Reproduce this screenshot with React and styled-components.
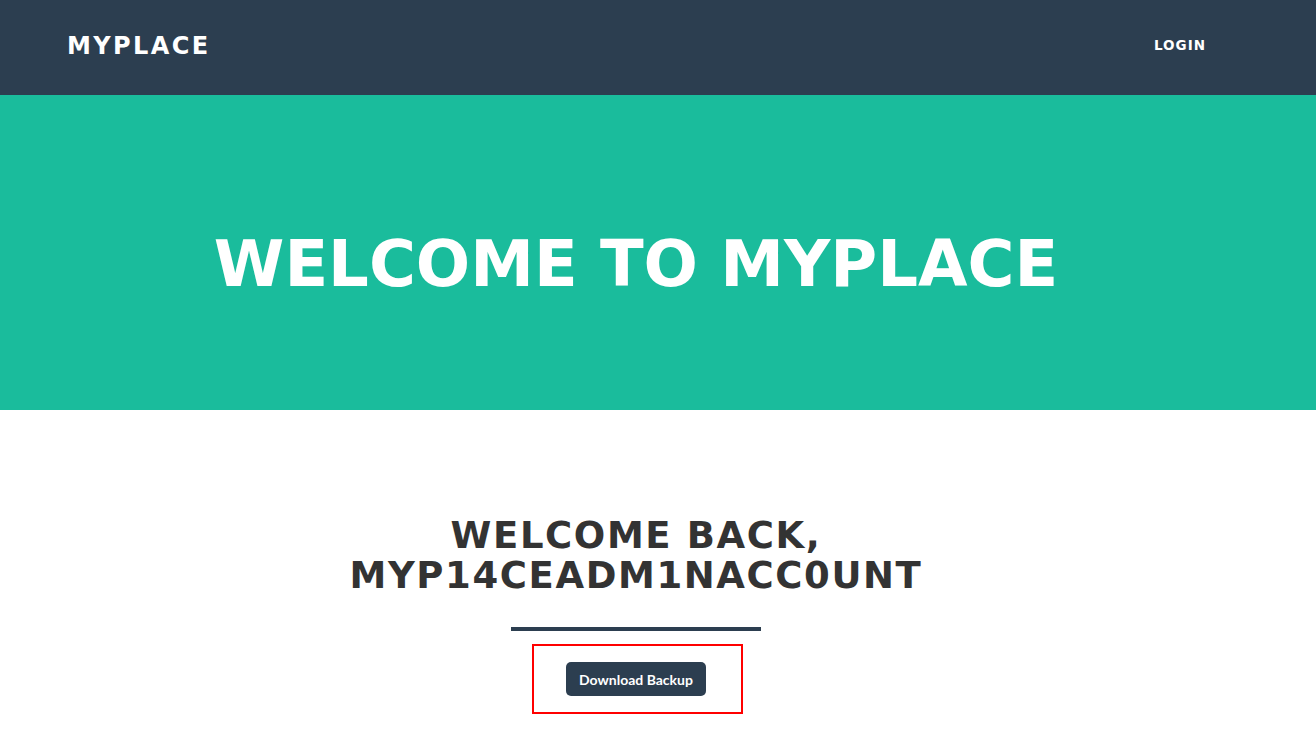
import React from "react";
import styled, { createGlobalStyle } from "styled-components";

const GlobalStyle = createGlobalStyle`
  html, body {
    margin: 0;
    padding: 0;
    background: #ffffff;
  }
  body {
    font-family: "Lato", "Noto Sans", sans-serif;
    overflow: hidden;
  }
  * { box-sizing: border-box; }
`;

const Page = styled.div`
  width: 1316px;
  min-height: 747px;
  display: flex;
  flex-direction: column;
`;

const NavBar = styled.nav`
  height: 95px;
  background: #2c3e50;
  display: flex;
  align-items: center;
  justify-content: space-between;
  padding: 0 110px 3px 67px;
`;

const Brand = styled.a`
  font-family: "DejaVu Sans", sans-serif;
  font-weight: 700;
  font-size: 24px;
  letter-spacing: 2.4px;
  color: #ffffff;
  text-decoration: none;
`;

const NavLink = styled.a`
  font-family: "DejaVu Sans", sans-serif;
  font-weight: 700;
  font-size: 13.5px;
  letter-spacing: 1px;
  color: #ffffff;
  text-decoration: none;
  margin-bottom: 2px;
`;

const Masthead = styled.header`
  background: #1abc9c;
  height: 315px;
  display: flex;
  justify-content: center;
  padding: 137px 44px 0 0;
`;

const MastheadHeading = styled.h1`
  margin: 0;
  font-family: "DejaVu Sans", sans-serif;
  font-weight: 700;
  font-size: 64px;
  line-height: 64px;
  color: #ffffff;
  white-space: nowrap;
`;

const Section = styled.section`
  display: flex;
  flex-direction: column;
  align-items: center;
  padding: 106px 44px 0 0;
`;

const SectionHeading = styled.h2`
  margin: 0;
  font-family: "DejaVu Sans", sans-serif;
  font-weight: 700;
  font-size: 37px;
  line-height: 40px;
  letter-spacing: 1.6px;
  color: #333333;
  text-align: center;
`;

const Divider = styled.div`
  width: 250px;
  height: 4px;
  background: #2c3e50;
  margin-top: 31px;
`;

const HighlightBox = styled.div`
  width: 211px;
  height: 70px;
  margin: 13px 0 0 3px;
  border: 2px solid #ff0000;
  display: flex;
  align-items: center;
  justify-content: center;
  padding-right: 3px;
`;

const Button = styled.button`
  height: 34px;
  padding: 0 13px;
  border: none;
  border-radius: 5px;
  background: #2c3e50;
  color: #ffffff;
  font-family: "Lato", sans-serif;
  font-weight: 700;
  font-size: 14px;
  cursor: pointer;
`;

export default function App() {
  return (
    <Page>
      <GlobalStyle />
      <NavBar>
        <Brand href="#">MYPLACE</Brand>
        <NavLink href="#">LOGIN</NavLink>
      </NavBar>
      <Masthead>
        <MastheadHeading>WELCOME TO MYPLACE</MastheadHeading>
      </Masthead>
      <Section>
        <SectionHeading>
          WELCOME BACK,
          <br />
          MYP14CEADM1NACC0UNT
        </SectionHeading>
        <Divider />
        <HighlightBox>
          <Button>Download Backup</Button>
        </HighlightBox>
      </Section>
    </Page>
  );
}
